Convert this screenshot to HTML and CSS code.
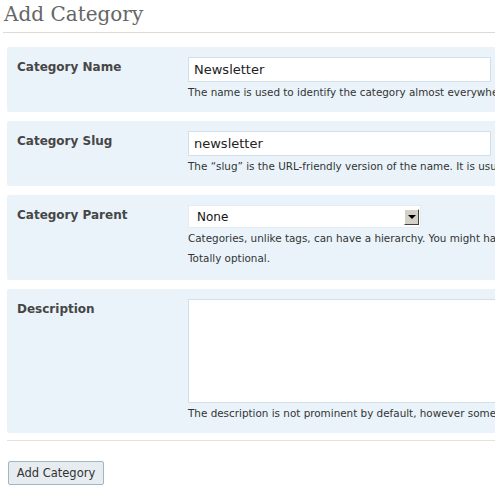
FILE: index.html
```html
<!DOCTYPE html>
<html>
<head>
<meta charset="utf-8">
<link rel="stylesheet" href="styles.css">
</head>
<body>
<div class="page">
  <h2 class="title">Add Category</h2>
  <div class="rule"></div>
  <div class="form">
    <div class="row">
      <div class="label">Category Name</div>
      <div class="field">
        <div class="input wide">Newsletter</div>
        <div class="desc">The name is used to identify the category almost everywhere, for example under the post or in the category widget.</div>
      </div>
    </div>
    <div class="row">
      <div class="label">Category Slug</div>
      <div class="field">
        <div class="input wide">newsletter</div>
        <div class="desc">The “slug” is the URL-friendly version of the name. It is usually all lowercase and contains only letters, numbers, and hyphens.</div>
      </div>
    </div>
    <div class="row">
      <div class="label">Category Parent</div>
      <div class="field">
        <div class="select">
          <span class="select-text">None</span>
          <span class="select-btn"><span class="arrow"></span></span>
        </div>
        <div class="desc two">Categories, unlike tags, can have a hierarchy. You might have a Jazz category, and under that have children categories for Bebop and Big Band.<br>Totally optional.</div>
      </div>
    </div>
    <div class="row">
      <div class="label">Description</div>
      <div class="field">
        <div class="textarea"></div>
        <div class="desc">The description is not prominent by default, however some themes may show it.</div>
      </div>
    </div>
  </div>
  <div class="rule2"></div>
  <div class="actions">
    <button class="button">Add Category</button>
  </div>
</div>
</body>
</html>
```

FILE: styles.css
```css
html, body {
  margin: 0;
  padding: 0;
  background: #fff;
  overflow: hidden;
}
.page {
  width: 900px;
  font-family: "DejaVu Sans", Verdana, sans-serif;
  color: #333;
}
.title {
  margin: 0;
  padding: 0 0 0 4px;
  height: 32px;
  font-family: "DejaVu Serif", Georgia, serif;
  font-weight: normal;
  font-size: 20px;
  line-height: 28px;
  color: #666;
}
.rule {
  margin-left: 3px;
  height: 1px;
  background: #dadada;
}
.form {
  margin: 14px 0 0 7px;
  display: flex;
  flex-direction: column;
  gap: 9px;
}
.row {
  display: flex;
  background: #eaf3fa;
  border-radius: 2px;
  padding: 10px 0 12px 0;
}
.label {
  flex-shrink: 0;
  width: 171px;
  padding-left: 10px;
  font-weight: bold;
  font-size: 12px;
  line-height: 16px;
  padding-top: 2px;
  color: #464646;
}
.field {
  flex-shrink: 0;
  display: flex;
  flex-direction: column;
}
.input {
  box-sizing: border-box;
  height: 25px;
  background: #fff;
  border: 1px solid #d3e0ea;
  font-size: 13px;
  line-height: 23px;
  padding-left: 5px;
  color: #222;
}
.wide {
  width: 303px;
}
.desc {
  margin-top: 2px;
  font-size: 10.4px;
  line-height: 16px;
  white-space: nowrap;
  color: #333;
}
.desc.two {
  margin-top: 0;
  line-height: 20px;
}
.select {
  box-sizing: border-box;
  width: 233px;
  height: 23px;
  background: #fff;
  border: 1px solid #e4ecf2;
  display: flex;
  align-items: center;
  justify-content: space-between;
  padding-right: 1px;
}
.select-text {
  font-size: 12px;
  padding-left: 8px;
  color: #111;
}
.select-btn {
  box-sizing: border-box;
  width: 15px;
  height: 16px;
  background: #d4d0c8;
  border-top: 1px solid #fff;
  border-left: 1px solid #fff;
  border-right: 1px solid #404040;
  border-bottom: 1px solid #404040;
  display: flex;
  align-items: center;
  justify-content: center;
}
.arrow {
  width: 0;
  height: 0;
  border-left: 4px solid transparent;
  border-right: 4px solid transparent;
  border-top: 4px solid #000;
  margin-top: 1px;
}
.textarea {
  box-sizing: border-box;
  width: 400px;
  height: 104px;
  background: #fff;
  border: 1px solid #d3e0ea;
}
.rule2 {
  margin: 7px 0 0 7px;
  height: 1px;
  background: #e5e2da;
}
.actions {
  padding: 20px 0 0 8px;
}
.button {
  box-sizing: border-box;
  width: 96px;
  height: 24px;
  background: #e6ecef;
  border: 1px solid #a3b6c4;
  border-radius: 2px;
  font-family: "DejaVu Sans", Verdana, sans-serif;
  font-size: 11.5px;
  color: #333;
  padding: 0;
}
```
